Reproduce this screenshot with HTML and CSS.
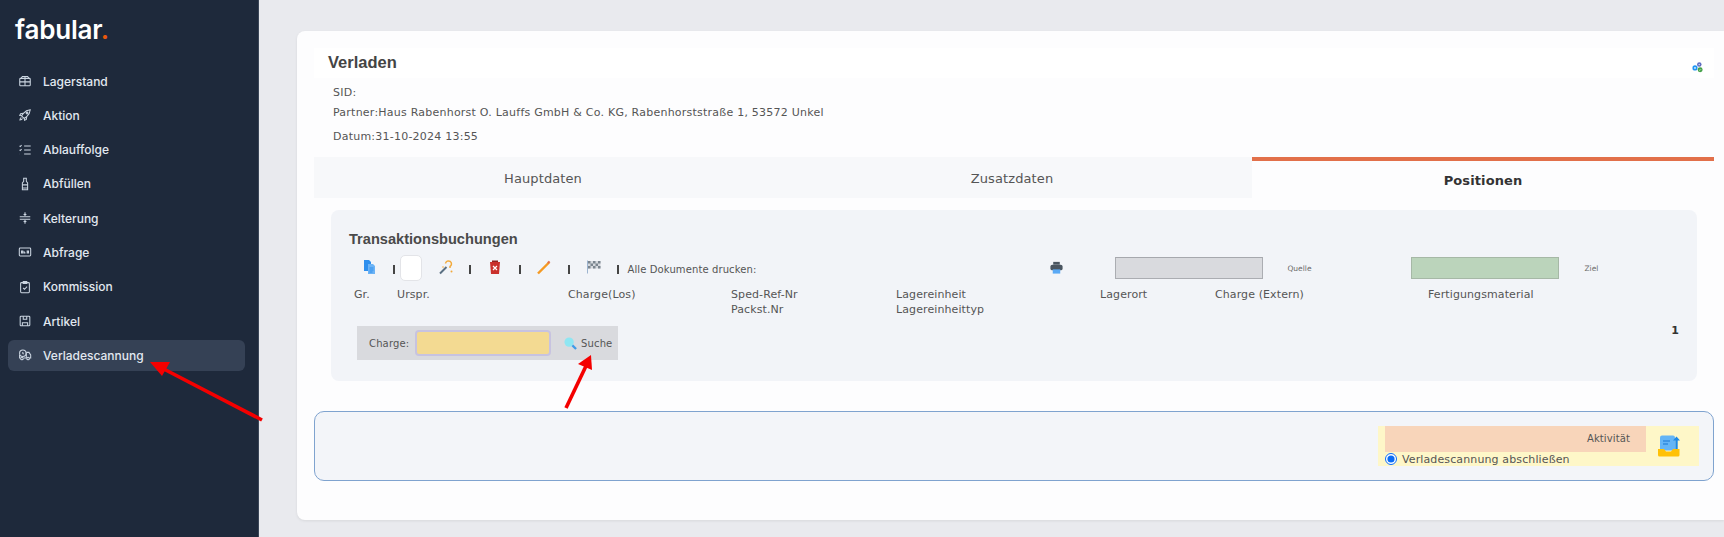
FILE: index.html
```html
<!DOCTYPE html>
<html lang="de">
<head>
<meta charset="utf-8">
<title>Verladen</title>
<link rel="stylesheet" href="styles.css">
</head>
<body>
<div class="app">
  <aside class="sidebar">
    <div class="logo">fabular<span class="logo-dot">.</span></div>
    <nav class="nav">
      <a class="nav-item"><svg class="nav-icon" viewBox="0 0 16 16"><rect x="2" y="5" width="12" height="8.5" rx="1"/><path d="M2 9h12M8 5v8.5M3.5 5 5 2.8h6L12.500 5M8 2.800V5"/></svg>Lagerstand</a>
      <a class="nav-item"><svg class="nav-icon" viewBox="0 0 16 16"><path d="M5.500 10.500 4 8.800l2.500-3C8.500 3.300 11 2.300 14 2c-.3 3-1.300 5.500-3.800 7.500l-3 2.500z"/><circle cx="10.300" cy="5.700" r="1"/><path d="M6 6 3 6.500 2 8.500l2 .3M10 10l-.5 3-2 1-.3-2M3.800 10.700c-1 .6-1.500 1.700-1.600 3 1.300-.1 2.400-.6 3-1.600" /></svg>Aktion</a>
      <a class="nav-item"><svg class="nav-icon" viewBox="0 0 16 16"><path d="M7 3.500h7.500M7 8h7.500M7 12.500h7.500M1.800 3.300l.8.8 1.500-1.600M1.800 7.800l.8.800 1.500-1.600M2 12.500h.1"/></svg>Ablauffolge</a>
      <a class="nav-item"><svg class="nav-icon" viewBox="0 0 16 16"><path d="M6.500 1.500h3v3.300l1.500 2v7.700H5V6.800l1.500-2zM5 9h6M5 12.500h6"/></svg>Abfüllen</a>
      <a class="nav-item"><svg class="nav-icon" viewBox="0 0 16 16"><path d="M2 6.500h12M2 9.500h12M8 1.500v3M6.500 3.500 8 5l1.500-1.500M8 14.500v-3M6.500 12.500 8 11l1.500 1.500"/></svg>Kelterung</a>
      <a class="nav-item"><svg class="nav-icon" viewBox="0 0 16 16"><rect x="1.500" y="3.500" width="13" height="9" rx="1"/><path d="M4 7h1.500v2H4zM7 7v2h1.500M10.500 7h1.500v2h-1.500z"/></svg>Abfrage</a>
      <a class="nav-item"><svg class="nav-icon" viewBox="0 0 16 16"><rect x="3" y="3" width="10" height="11.500" rx="1"/><path d="M6 1.800h4V4H6zM5.800 9l1.600 1.600 3-3"/></svg>Kommission</a>
      <a class="nav-item"><svg class="nav-icon" viewBox="0 0 16 16"><rect x="2.500" y="2.500" width="11" height="11" rx="1"/><path d="M6 2.500v3.500h4V2.500M5 13.500V10h6v3.500"/></svg>Artikel</a>
      <a class="nav-item nav-active"><svg class="nav-icon" viewBox="0 0 16 16"><circle cx="5.500" cy="6" r="3.700"/><path d="M9.500 5h3l2 3v3.500h-1.500M9.500 5v6.500M1.800 8v3.500h.8M6.800 11.500h2.700M5.500 4.500V6.200l1 .6"/><circle cx="4.500" cy="12" r="1.500"/><circle cx="11.500" cy="12" r="1.500"/></svg>Verladescannung</a>
    </nav>
  </aside>
  <main class="main">
    <section class="card">
      <header class="head-strip">
        <h1 class="page-title">Verladen</h1>
        <svg class="workflow-icon" viewBox="0 0 14 14"><circle cx="8.500" cy="3.500" r="2.600" fill="#5c6bc0"/><circle cx="3.500" cy="7.500" r="3" fill="#2196f3"/><circle cx="9.500" cy="9.500" r="2.900" fill="#43a047"/><circle cx="8.500" cy="3.500" r="1" fill="#c5cae9"/><circle cx="3.500" cy="7.500" r="1.100" fill="#e3f2fd"/><path d="M8.300 9.800l1 .6 1.300-1.400" stroke="#c8e6c9" fill="none"/></svg>
      </header>
      <div class="info">
        <div class="info-sid">SID:</div>
        <div class="info-partner">Partner:Haus Rabenhorst O. Lauffs GmbH &amp; Co. KG, Rabenhorststraße 1, 53572 Unkel</div>
        <div class="info-date">Datum:31-10-2024 13:55</div>
      </div>
      <div class="tabs">
        <div class="tab">Hauptdaten</div>
        <div class="tab">Zusatzdaten</div>
        <div class="tab tab-active">Positionen</div>
      </div>
      <section class="panel">
        <h2 class="panel-title">Transaktionsbuchungen</h2>
        <div class="toolbar">
          <svg class="tool" viewBox="0 0 16 16"><path d="M3 1h5l2 2v9H3z" fill="#2f8fee"/><path d="M7 5h5l2 2v8H7z" fill="#6db3f5"/><path d="M8.500 9h4M8.500 11h4M8.500 13h3" stroke="#2f8fee"/></svg>
          <span class="sep"></span>
          <span class="blank-box"></span>
          <svg class="tool" viewBox="0 0 16 16"><path d="M2 14.500 8.500 8" stroke="#5b7083" stroke-width="2"/><path d="M7.500 4.500a3 3 0 1 1 4.500 3v1.500" fill="none" stroke="#f2a93b" stroke-width="1.500"/><circle cx="13.500" cy="12.500" r="1" fill="#f2a93b"/><circle cx="5" cy="8" r=".8" fill="#f2a93b"/></svg>
          <span class="sep"></span>
          <svg class="tool" viewBox="0 0 16 16"><path d="M3 3h10l-1 12H4z" fill="#c9302c"/><path d="M5 1.500h6V3H5z" fill="#8e2320"/><path d="M6 7l4 4M10 7l-4 4" stroke="#fff" stroke-width="1.200"/></svg>
          <span class="sep"></span>
          <svg class="tool" viewBox="0 0 16 16"><path d="M2 14.500 13 3.500" stroke="#f59a23" stroke-width="2.400"/><path d="M12 2.500l1.500 1.500" stroke="#e2704a" stroke-width="2.400"/></svg>
          <span class="sep"></span>
          <svg class="tool" viewBox="0 0 16 16"><rect x="1" y="1.500" width="1" height="13" fill="#9db4cf"/><rect x="2" y="2" width="12.500" height="7.500" fill="#d5d8dd"/><path d="M2 2h2.500v2.500H2zM7 2h2.500v2.500H7zM12 2h2.500v2.500H12zM4.500 4.500H7V7H4.500zM9.500 4.500H12V7H9.500zM2 7h2.500v2.500H2zM7 7h2.500v2.500H7zM12 7h2.500v2.500H12z" fill="#7b858f"/></svg>
          <span class="sep"></span>
          <span class="print-label">Alle Dokumente drucken:</span>
          <svg class="tool tool-print" viewBox="0 0 16 16"><path d="M4.500 2h7v3h-7z" fill="#4a5560"/><rect x="1.500" y="5" width="13" height="6" rx="2" fill="#4a5560"/><path d="M4 10h8v4.500H4z" fill="#5aa9f5"/></svg>
          <span class="swatch swatch-source"></span>
          <span class="swatch-label label-source">Quelle</span>
          <span class="swatch swatch-target"></span>
          <span class="swatch-label label-target">Ziel</span>
        </div>
        <div class="cols">
          <div>Gr.</div>
          <div>Urspr.</div>
          <div>Charge(Los)</div>
          <div>Sped-Ref-Nr<br>Packst.Nr</div>
          <div>Lagereinheit<br>Lagereinheittyp</div>
          <div>Lagerort</div>
          <div>Charge (Extern)</div>
          <div>Fertigungsmaterial</div>
        </div>
        <div class="search-row">
          <div class="search-bar">
            <label class="search-label" for="charge">Charge:</label>
            <input class="search-input" id="charge" type="text">
            <svg class="search-icon" viewBox="0 0 14 14"><circle cx="5.500" cy="5.500" r="5" fill="#8fe6f2"/><path d="M9 9l4 4" stroke="#3f9be8" stroke-width="2.400"/></svg>
            <span>Suche</span>
          </div>
          <b class="page-num">1</b>
        </div>
      </section>
      <section class="action-box">
        <div class="activity">
          <div class="activity-body">
            <div class="activity-head">Aktivität</div>
            <label class="activity-option"><input class="radio" type="radio" name="a" checked>Verladescannung abschließen</label>
          </div>
          <svg class="activity-icon" viewBox="0 0 24 22"><path d="M3 2.500Q3 0.500 5 0.500h11q2 0 2 2v13H3z" fill="#64b5f6"/><path d="M6 6h7M6 9h5" stroke="#1976d2" stroke-width="1.200"/><path d="M19.500 14V4" stroke="#1e88e5" stroke-width="2.400"/><path d="M16 5.500 19.500 1.500 23 5.500z" fill="#1e88e5"/><path d="M1 14h6l2 2.500h5l2-2.500h6.500v6a1.500 1.500 0 0 1-1.500 1.500H2.500A1.500 1.500 0 0 1 1 20z" fill="#ffc107"/></svg>
        </div>
      </section>
    </section>
  </main>
</div>
<svg class="arrows" viewBox="0 0 1724 537">
  <path d="M262 420 158 366" stroke="#f40000" stroke-width="3.600"/>
  <path d="M150 362 170 362 162 376z" fill="#f40000"/>
  <path d="M566 408 586 366" stroke="#f40000" stroke-width="3.600"/>
  <path d="M591 355 592 370 578 364z" fill="#f40000"/>
</svg>
</body>
</html>
```
FILE: styles.css
```css
* { box-sizing: border-box; }
html, body { margin: 0; height: 100%; overflow: hidden; }
body { position: relative; font-family: "DejaVu Sans", sans-serif; color: #555; background: #e9eaee; }
.app { display: flex; height: 100vh; }

.sidebar { flex: 0 0 259px; background: #1e293b; border-right: 1px solid #3b4658; padding: 0 13px 0 8px; }
.logo { height: 65.500px; padding: 14px 0 0 7px; font: 600 26px/32px Inter, sans-serif; color: #fff; letter-spacing: -.2px; }
.logo-dot { color: #ea580c; }
.nav { display: flex; flex-direction: column; gap: 3.300px; }
.nav-item { display: flex; align-items: center; gap: 11px; height: 31px; padding-left: 10px; border-radius: 6px; font: 500 12px Inter, sans-serif; color: #e2e8f0; }
.nav-active { background: #354155; }
.nav-icon { width: 14px; height: 14px; fill: none; stroke: #cbd5e1; stroke-width: 1.200; flex: none; }

.main { flex: 1; min-width: 0; padding: 31px 0 17px 38px; }
.card { height: 489px; background: #fdfdfe; border-radius: 8px 0 0 8px; padding: 17px 10px 0 17px; box-shadow: 0 1px 3px rgba(0,0,0,.08); }
.head-strip { display: flex; align-items: center; justify-content: space-between; height: 30px; padding: 0 10px 0 14px; background: #fff; }
.page-title { margin: -3px 0 0; font: 700 16.500px/20px "Liberation Sans", sans-serif; color: #444; }
.workflow-icon { width: 12px; height: 13px; margin-top: 8px; }
.info { padding: 7px 0 0 19px; font-size: 11px; letter-spacing: .23px; color: #555; }
.info-sid { line-height: 15px; }
.info-partner { margin-top: 5px; line-height: 15px; }
.info-date { margin-top: 9px; line-height: 15px; }

.tabs { display: grid; grid-template-columns: 467px 471px 1fr; margin-top: 13px; height: 41px; }
.tab { display: flex; align-items: center; justify-content: center; padding: 1px 9px 0 0; background: #f7f8fa; font-size: 13px; color: #555; letter-spacing: .1px; }
.tab-active { background: #fdfdfe; border-top: 4px solid #e2704a; padding: 1px 0 0; font-weight: 700; color: #333; }

.panel { margin: 12px 17px 0 17px; padding: 20px 18px 21px; background: #f2f4f8; border-radius: 8px; height: 171px; }
.panel-title { margin: 0; font: 700 14.600px/18px "Liberation Sans", sans-serif; color: #4a4a4a; }
.toolbar { display: flex; align-items: center; gap: 15.700px; height: 26px; margin-top: 7px; padding-left: 12px; font-size: 10px; }
.tool { width: 16px; height: 16px; flex: none; margin-top: -3px; }
.sep { width: 2px; height: 9px; background: #444; flex: none; margin-top: 2px; }
.blank-box { width: 22px; height: 26px; margin-left: -10.400px; background: #fff; border: 1px solid #e3e4e8; border-radius: 5px; flex: none; }
.print-label { margin-left: -7.700px; width: 130px; font-size: 10px; letter-spacing: .11px; white-space: nowrap; margin-top: 2px; flex: none; }
.tool.tool-print { margin-left: 275.800px; margin-top: -2px; width: 15px; height: 15px; }
.swatch { width: 148px; height: 22px; flex: none; border: 1px solid #abadb2; border-top-color: #a6a8ad; }
.swatch-source { background: #d9dade; margin-left: 35.800px; }
.swatch-target { background: #bbd4bb; border-color: #a6b8a6; margin-left: 78.300px; }
.swatch-label { font-size: 7.500px; color: #6a6a6a; flex: none; }
.label-source { width: 30px; margin-left: 8.300px; }
.label-target { width: 20px; margin-left: 9.300px; }

.cols { display: grid; grid-template-columns: 43px 171px 163px 165px 204px 115px 213px 1fr; margin-top: 6px; padding-left: 5px; font-size: 11px; line-height: 15px; letter-spacing: .1px; color: #555; }
.search-row { display: flex; justify-content: space-between; margin-top: 9px; padding-left: 8px; }
.search-bar { display: flex; align-items: center; width: 261px; height: 34px; padding-left: 12px; background: #d9dade; font-size: 10px; letter-spacing: .15px; }
.search-label { width: 46px; flex: none; }
.search-input { width: 136px; height: 26px; flex: none; background: #f3da92; border: 2px solid #c7c3e0; border-radius: 4px; padding: 0; }
.search-icon { width: 13px; height: 13px; margin: 0 4px 0 13px; flex: none; }
.page-num { margin-top: -2px; font-size: 11px; color: #333; }

.action-box { margin-top: 30px; height: 70px; padding-top: 14px; background: #f3f5f9; border: 1px solid #7fa3cf; border-radius: 10px; display: flex; justify-content: flex-end; padding-right: 14px; }
.activity { display: flex; width: 321px; height: 40px; padding-left: 7px; background: #fef7c8; }
.activity-body { width: 261px; font-size: 11px; letter-spacing: .12px; }
.activity-head { height: 26px; padding-right: 16px; background: #f8d5ba; text-align: right; line-height: 26px; font-size: 10px; }
.activity-option { display: flex; align-items: center; height: 14px; white-space: nowrap; color: #555; }
.radio { width: 12px; height: 12px; margin: 0 5px 0 0; accent-color: #0a6cf5; }
.activity-icon { width: 24px; height: 22px; margin: 9px 0 0 11px; flex: none; }

.arrows { position: absolute; left: 0; top: 0; width: 1724px; height: 537px; pointer-events: none; }
```
